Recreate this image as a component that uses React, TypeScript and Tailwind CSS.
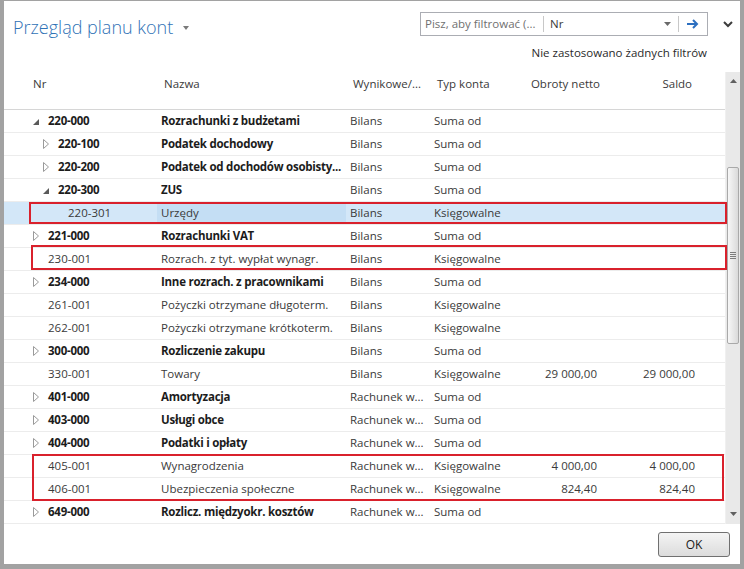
import React from 'react'

type Row = {
  nr: string
  name: string
  kind: string
  type: string
  level: number
  node?: 'open' | 'closed'
  bold?: boolean
  net?: string
  bal?: string
  selected?: boolean
}

const rows: Row[] = [
  { nr: '220-000', name: 'Rozrachunki z budżetami', kind: 'Bilans', type: 'Suma od', level: 0, node: 'open', bold: true },
  { nr: '220-100', name: 'Podatek dochodowy', kind: 'Bilans', type: 'Suma od', level: 1, node: 'closed', bold: true },
  { nr: '220-200', name: 'Podatek od dochodów osobisty...', kind: 'Bilans', type: 'Suma od', level: 1, node: 'closed', bold: true },
  { nr: '220-300', name: 'ZUS', kind: 'Bilans', type: 'Suma od', level: 1, node: 'open', bold: true },
  { nr: '220-301', name: 'Urzędy', kind: 'Bilans', type: 'Księgowalne', level: 2, selected: true },
  { nr: '221-000', name: 'Rozrachunki VAT', kind: 'Bilans', type: 'Suma od', level: 0, node: 'closed', bold: true },
  { nr: '230-001', name: 'Rozrach. z tyt. wypłat wynagr.', kind: 'Bilans', type: 'Księgowalne', level: 0 },
  { nr: '234-000', name: 'Inne rozrach. z pracownikami', kind: 'Bilans', type: 'Suma od', level: 0, node: 'closed', bold: true },
  { nr: '261-001', name: 'Pożyczki otrzymane długoterm.', kind: 'Bilans', type: 'Księgowalne', level: 0 },
  { nr: '262-001', name: 'Pożyczki otrzymane krótkoterm.', kind: 'Bilans', type: 'Księgowalne', level: 0 },
  { nr: '300-000', name: 'Rozliczenie zakupu', kind: 'Bilans', type: 'Suma od', level: 0, node: 'closed', bold: true },
  { nr: '330-001', name: 'Towary', kind: 'Bilans', type: 'Księgowalne', level: 0, net: '29 000,00', bal: '29 000,00' },
  { nr: '401-000', name: 'Amortyzacja', kind: 'Rachunek w...', type: 'Suma od', level: 0, node: 'closed', bold: true },
  { nr: '403-000', name: 'Usługi obce', kind: 'Rachunek w...', type: 'Suma od', level: 0, node: 'closed', bold: true },
  { nr: '404-000', name: 'Podatki i opłaty', kind: 'Rachunek w...', type: 'Suma od', level: 0, node: 'closed', bold: true },
  { nr: '405-001', name: 'Wynagrodzenia', kind: 'Rachunek w...', type: 'Księgowalne', level: 0, net: '4 000,00', bal: '4 000,00' },
  { nr: '406-001', name: 'Ubezpieczenia społeczne', kind: 'Rachunek w...', type: 'Księgowalne', level: 0, net: '824,40', bal: '824,40' },
  { nr: '649-000', name: 'Rozlicz. międzyokr. kosztów', kind: 'Rachunek w...', type: 'Suma od', level: 0, node: 'closed', bold: true },
]

// wcięcia drzewa: 10px na poziom
const indent = ['pl-[29px]', 'pl-[39px]', 'pl-[49px]']

function Toggle({ node }: { node?: 'open' | 'closed' }) {
  if (node === 'open')
    return (
      <svg width="6" height="6" viewBox="0 0 6 6" className="mt-[2px]">
        <polygon points="6,0 6,6 0,6" fill="#5a5a5a" />
      </svg>
    )
  if (node === 'closed')
    return (
      <svg width="6" height="10" viewBox="0 0 6 10">
        <polygon points="0.5,0.5 5.5,5 0.5,9.5" fill="white" stroke="#9a9a9a" />
      </svg>
    )
  return null
}

function GridRow({ r }: { r: Row }) {
  const txt = r.bold ? 'font-bold tracking-[-0.25px] text-[#1c1c1c]' : 'text-[#3a3a3a]'
  return (
    <div className={`flex h-[23px] items-center border-b border-[#ececec] ${r.selected ? 'bg-[#d3e7f8]' : ''}`}>
      <div className={`flex w-[153px] items-center ${indent[r.level]}`}>
        <div className="flex w-[15px] items-center">
          <Toggle node={r.node} />
        </div>
        <span className={txt}>{r.nr}</span>
      </div>
      <div className={`flex h-full w-[189px] items-center whitespace-nowrap overflow-hidden pl-[4px] ${txt} ${r.selected ? 'bg-[#c4def4]' : ''}`}>
        {r.name}
      </div>
      <div className="w-[84px] pl-[4px] whitespace-nowrap text-[#3a3a3a]">{r.kind}</div>
      <div className="w-[80px] pl-[4px] whitespace-nowrap text-[#3a3a3a]">{r.type}</div>
      <div className="w-[93px] pr-[6px] text-right text-[#3a3a3a]">{r.net}</div>
      <div className="w-[95px] pr-[3px] text-right text-[#3a3a3a]">{r.bal}</div>
    </div>
  )
}

function Scrollbar() {
  return (
    <div className="flex w-[15px] flex-col bg-[#e9e9e9] border-l border-[#f0f0f0]">
      <div className="flex h-[17px] items-center justify-center pt-[1px]">
        <svg width="7" height="4" viewBox="0 0 7 4"><polygon points="3.5,0 7,4 0,4" fill="#606060" /></svg>
      </div>
      <div className="flex-1">
        <div className="mx-[1px] mt-[78px] flex h-[177px] items-center justify-center rounded-[2px] border border-[#a9a9a9] bg-gradient-to-r from-[#f7f7f7] to-[#dadada]">
          <div className="flex flex-col gap-[1px]">
            <div className="h-px w-[6px] bg-[#7d7d7d]" />
            <div className="h-px w-[6px] bg-[#7d7d7d]" />
            <div className="h-px w-[6px] bg-[#7d7d7d]" />
            <div className="h-px w-[6px] bg-[#7d7d7d]" />
          </div>
        </div>
      </div>
      <div className="flex h-[17px] items-center justify-center pb-[3px]">
        <svg width="7" height="4" viewBox="0 0 7 4"><polygon points="0,0 7,0 3.5,4" fill="#606060" /></svg>
      </div>
    </div>
  )
}

export default function App() {
  return (
    <div className="w-[744px] h-[569px] border-l-[4px] border-r-[4px] border-b-[5px] border-t border-[#a2a2a2] bg-white font-['Open_Sans',sans-serif] text-[11.5px] flex flex-col overflow-hidden">
      {/* nagłówek strony */}
      <div className="h-[71px] flex flex-col">
        <div className="flex h-[24px] mt-[11px] items-center">
          <div className="ml-[9px] mt-[6px] flex items-center text-[18px] leading-[24px] font-light text-[#2f72b6]">
            Przegląd planu kont
            <svg width="6" height="4" viewBox="0 0 6 4" className="ml-[10px] mt-[1px]"><polygon points="0,0 6,0 3,4" fill="#7a7a7a" /></svg>
          </div>
          <div className="ml-auto flex h-[24px] w-[288px] items-center border border-[#abadb3] bg-white">
            <div className="w-[122px] pl-[4px] text-[#707070] whitespace-nowrap">Pisz, aby filtrować (...</div>
            <div className="h-[16px] w-px bg-[#c8c8c8]" />
            <div className="flex-1 pl-[6px] text-[#3a3a3a]">Nr</div>
            <svg width="7" height="4" viewBox="0 0 7 4" className="mr-[7px]"><polygon points="0,0 7,0 3.5,4" fill="#6a6a6a" /></svg>
            <div className="h-[16px] w-px bg-[#c8c8c8]" />
            <svg width="12" height="10" viewBox="0 0 12 10" className="mx-[8px]">
              <path d="M0 5 H10 M6 1 L10 5 L6 9" fill="none" stroke="#2c6fc0" strokeWidth="2" />
            </svg>
          </div>
          <svg width="10" height="7" viewBox="0 0 10 7" className="ml-[15px] mr-[7px]">
            <path d="M1 1 L5 5 L9 1" fill="none" stroke="#3c3c3c" strokeWidth="2" />
          </svg>
        </div>
        <div className="mt-[8px] pr-[33px] text-right text-[#2a2a2a]">Nie zastosowano żadnych filtrów</div>
      </div>

      {/* siatka */}
      <div className="flex h-[452px]">
        <div className="relative flex-1">
          <div className="flex h-[38px] items-start pt-[3px] border-b border-[#d6d6d6] text-[#3a3a3a]">
            <div className="w-[153px] pl-[29px]">Nr</div>
            <div className="w-[189px] pl-[7px]">Nazwa</div>
            <div className="w-[84px] pl-[7px] whitespace-nowrap">Wynikowe/...</div>
            <div className="w-[80px] pl-[7px]">Typ konta</div>
            <div className="w-[93px] pr-[3px] text-right whitespace-nowrap">Obroty netto</div>
            <div className="w-[95px] pr-[6px] text-right">Saldo</div>
          </div>
          {rows.map(r => (
            <GridRow key={r.nr} r={r} />
          ))}
          {/* czerwone ramki */}
          <div className="absolute left-[25px] top-[130px] h-[22px] w-[698px] border-2 border-[#d9212c]" />
          <div className="absolute left-[27px] top-[173px] h-[25px] w-[696px] border-2 border-[#d9212c]" />
          <div className="absolute left-[28px] top-[382px] h-[47px] w-[692px] border-2 border-[#d9212c]" />
        </div>
        <Scrollbar />
      </div>

      {/* stopka */}
      <div className="flex flex-1 justify-end pt-[8px] pr-[10px]">
        <button className="h-[25px] w-[72px] rounded-[3px] border border-[#707070] bg-gradient-to-b from-[#f4f4f4] to-[#dcdcdc] text-[12px] text-[#1a1a1a]">
          OK
        </button>
      </div>
    </div>
  )
}
